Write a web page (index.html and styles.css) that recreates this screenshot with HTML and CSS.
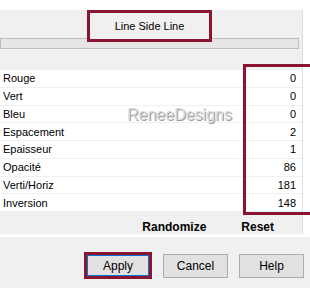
FILE: index.html
```html
<!DOCTYPE html>
<html lang="fr">
<head>
    <meta charset="UTF-8">
    <title>Line Side Line</title>
    <link rel="stylesheet" href="styles.css">
</head>
<body>
    <div class="window">
        <div class="frame">
            <div class="panel">
                <!-- Preset title -->
                <div class="title-row">
                    <div class="title-btn">Line Side Line</div>
                </div>
                <div class="bar"></div>

                <!-- Parameters -->
                <div class="params">
                    <div class="row"><span>Rouge</span><span>0</span></div>
                    <div class="row"><span>Vert</span><span>0</span></div>
                    <div class="row"><span>Bleu</span><span>0</span></div>
                    <div class="row"><span>Espacement</span><span>2</span></div>
                    <div class="row"><span>Epaisseur</span><span>1</span></div>
                    <div class="row"><span>Opacité</span><span>86</span></div>
                    <div class="row"><span>Verti/Horiz</span><span>181</span></div>
                    <div class="row"><span>Inversion</span><span>148</span></div>
                    <div class="mark">ReneeDesigns</div>
                    <div class="values-box"></div>
                </div>

                <div class="actions">
                    <span>Randomize</span>
                    <span>Reset</span>
                </div>
            </div>
        </div>

        <!-- Dialog buttons -->
        <div class="buttons">
            <div class="apply-box"><button class="btn btn-apply">Apply</button></div>
            <button class="btn">Cancel</button>
            <button class="btn">Help</button>
        </div>
    </div>
</body>
</html>
```

FILE: styles.css
```css
/* General Styles */
body {
    margin: 0;
    font-family: "Liberation Sans", Arial, sans-serif;
    background-color: #f0f0f0;
    color: #000;
    overflow: hidden;
}

.window {
    width: 310px;
    height: 288px;
    overflow: hidden;
}

.frame {
    background-color: #fff;
    padding: 14px 7px 3px 0;
}

.panel {
    height: 224px;
    background-color: #f0f0f0;
    border-right: 1px solid #dcdcdc;
}

/* Title */
.title-row {
    position: relative;
    z-index: 1;
    display: flex;
    justify-content: center;
    padding-right: 3px;
    margin: -4px 0 -4px 0;
}

.title-btn {
    width: 119px;
    height: 26px;
    line-height: 26px;
    border: 3px solid #8a1530;
    background-color: #f0f0f0;
    font-size: 11px;
    text-align: center;
}

.bar {
    height: 9px;
    margin-right: 3px;
    border: 1px solid #bdbdbd;
    background-color: #e6e6e6;
}

/* Parameters */
.params {
    position: relative;
    display: flex;
    flex-direction: column;
    gap: 1px;
    margin-top: 21px;
}

.row {
    display: flex;
    justify-content: space-between;
    align-items: center;
    height: 16.75px;
    padding: 0 6px 0 3px;
    background-color: #fff;
    font-size: 11px;
}

.mark {
    position: absolute;
    left: 127px;
    top: 36px;
    font-size: 16px;
    color: #dadada;
    text-shadow: 1px 1px 0 #9a9a9a;
}

.values-box {
    position: absolute;
    left: 243px;
    right: -20px;
    top: -6px;
    height: 145px;
    border: 3px solid #8a1530;
}

.actions {
    display: flex;
    justify-content: flex-end;
    align-items: center;
    gap: 35px;
    height: 22px;
    padding: 5px 28px 0 0;
    font-size: 12px;
    font-weight: bold;
}

/* Dialog buttons */
.buttons {
    display: flex;
    justify-content: flex-end;
    align-items: center;
    gap: 11px;
    padding: 15px 6px 0 0;
}

.apply-box {
    display: flex;
    border: 3px solid #8a1530;
}

.btn {
    width: 65px;
    height: 24px;
    padding: 0;
    border: 1px solid #adadad;
    background-color: #e1e1e1;
    font-family: "Liberation Sans", Arial, sans-serif;
    font-size: 12px;
    color: #000;
}

.btn-apply {
    width: 62px;
    height: 21px;
    border-color: #0078d7;
}
```
